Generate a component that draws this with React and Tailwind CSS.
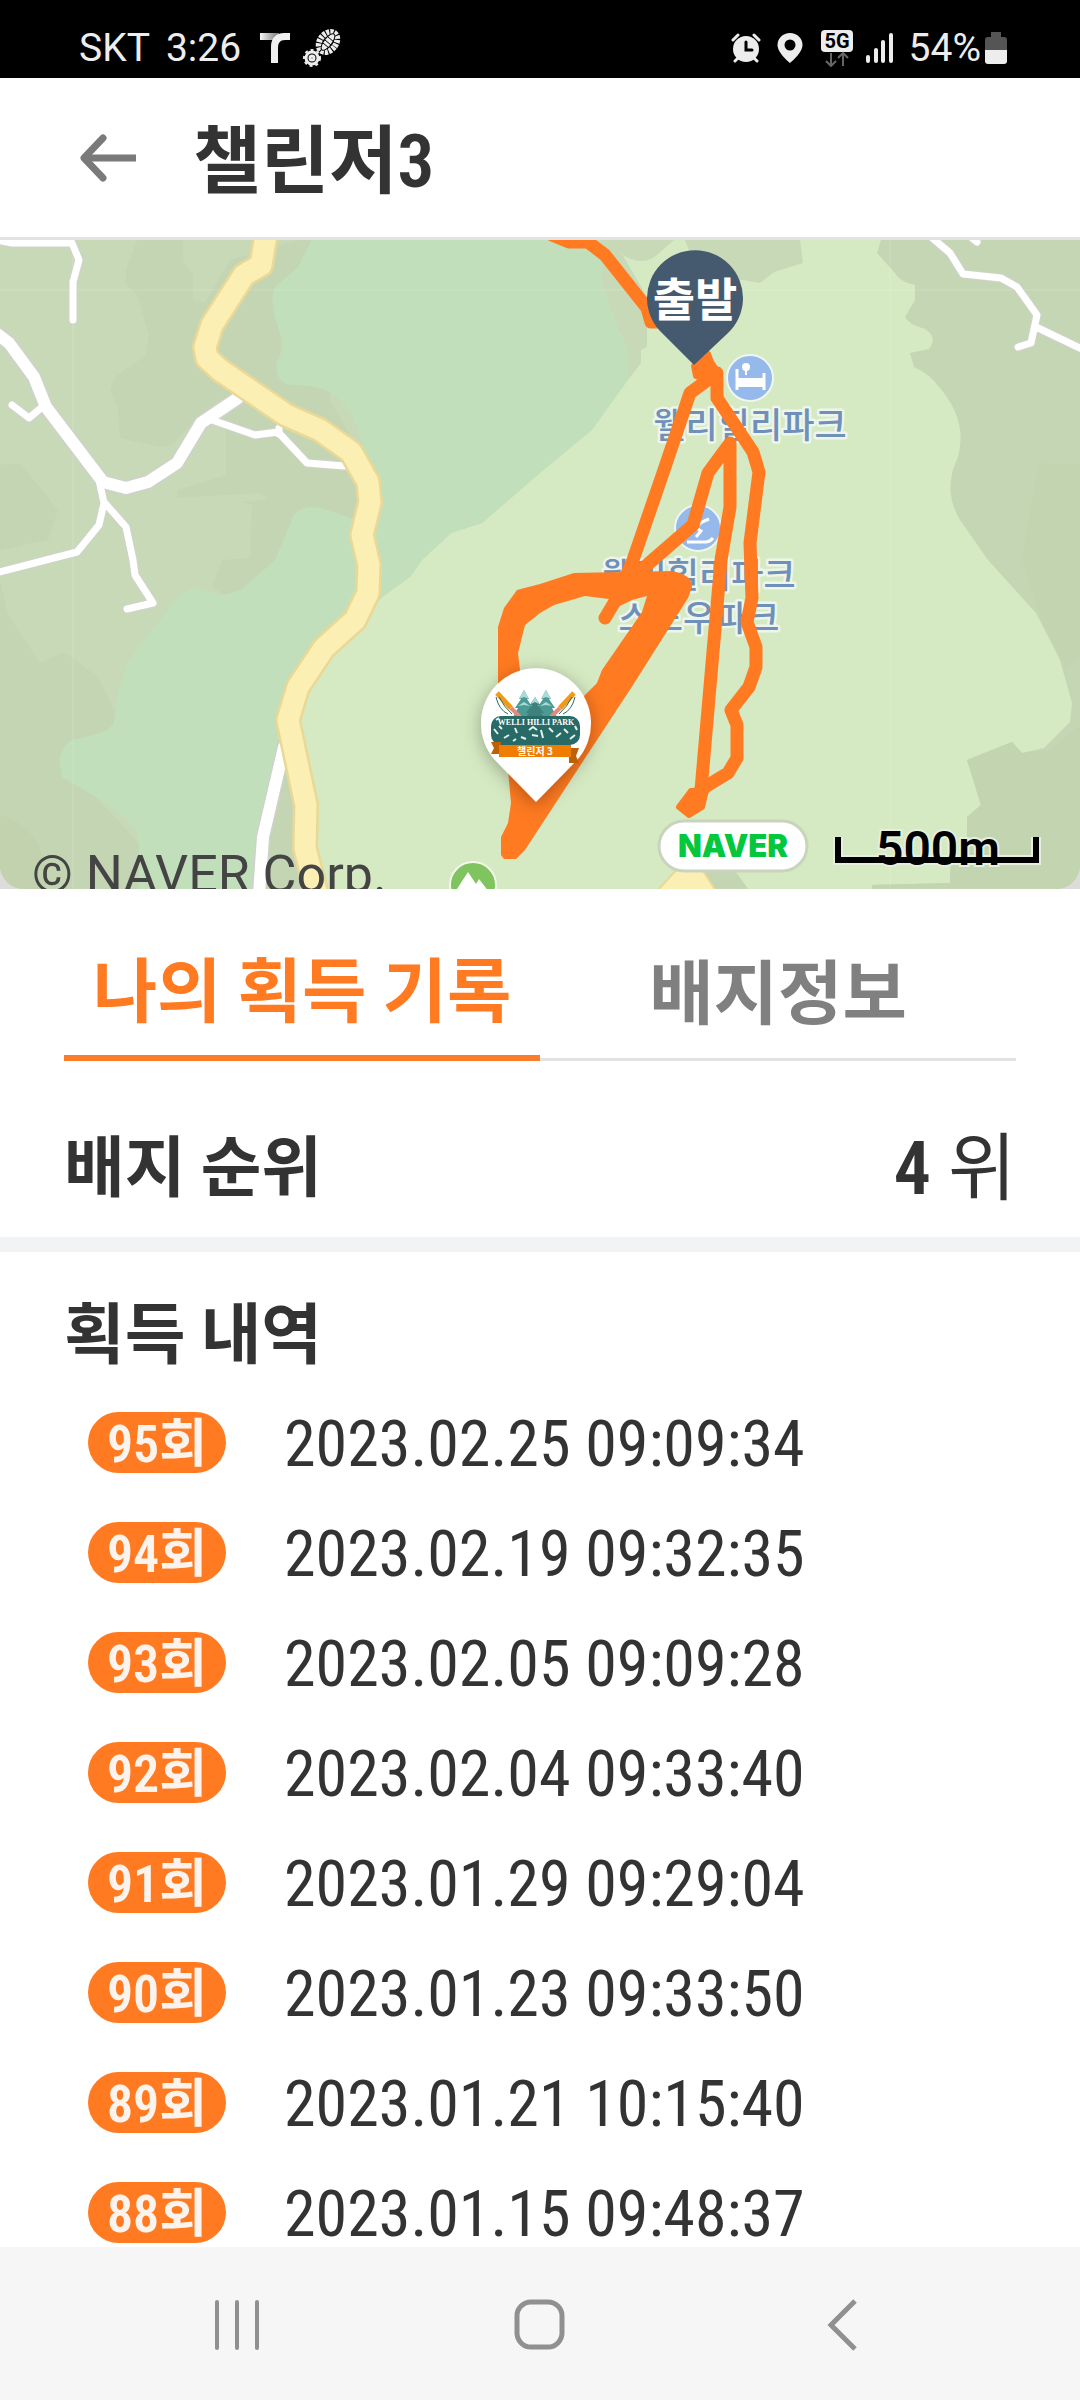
import React, { useState } from 'react';

const records = [
  { count: 95, date: '2023.02.25 09:09:34' },
  { count: 94, date: '2023.02.19 09:32:35' },
  { count: 93, date: '2023.02.05 09:09:28' },
  { count: 92, date: '2023.02.04 09:33:40' },
  { count: 91, date: '2023.01.29 09:29:04' },
  { count: 90, date: '2023.01.23 09:33:50' },
  { count: 89, date: '2023.01.21 10:15:40' },
  { count: 88, date: '2023.01.15 09:48:37' }
];

const tabs = [
  { id: 'records', label: '나의 획득 기록' },
  { id: 'info', label: '배지정보' }
];

const StatusBar = () => (
  <div className="flex h-[78px] items-center justify-between bg-black pl-[79px] pr-[73px] pt-[18px] font-['Roboto',sans-serif] text-[39px] leading-none text-[#ededed]">
    <div className="flex items-center">
      <span>SKT</span>
      <span className="ml-4">3:26</span>
      <svg className="ml-[18px] h-8 w-8" viewBox="0 0 32 32">
        <defs>
          <linearGradient id="tlogo">
            <stop offset="0" stopColor="#f5f5f5" />
            <stop offset="1" stopColor="#777" />
          </linearGradient>
        </defs>
        <path d="M1 1h19v7H1z" fill="url(#tlogo)" />
        <path d="M31 1v7h-5c-5 0-7 3-7 8v15h-7V15C12 6 17 1 25 1z" fill="#f0f0f0" />
      </svg>
      <svg className="ml-3 h-[38px] w-[38px]" viewBox="0 0 38 38" fill="none" stroke="#ededed">
        <ellipse cx="25" cy="13" rx="8" ry="11" transform="rotate(38 25 13)" strokeWidth="6" strokeDasharray="3 1" />
        <ellipse cx="25" cy="13" rx="4" ry="10" transform="rotate(38 25 13)" fill="#ededed" stroke="#000" strokeWidth="1" />
        <path d="M20 14l6 5M22 11l6 5M25 8l6 5" stroke="#000" strokeWidth="1" />
        <circle cx="9" cy="29" r="6" strokeWidth="3" />
        <circle cx="9" cy="29" r="8" strokeWidth="2" strokeDasharray="3 3" />
        <circle cx="9" cy="29" r="2" strokeWidth="3" />
      </svg>
    </div>
    <div className="flex items-center">
      <svg className="h-[30px] w-[30px]" viewBox="0 0 30 30">
        <path d="M2 7l5-5M28 7l-5-5M4 28l4-4M26 28l-4-4" stroke="#ededed" strokeWidth="3" strokeLinecap="round" />
        <circle cx="15" cy="16" r="13" fill="#ededed" />
        <path d="M15 9v8h6" fill="none" stroke="#000" strokeWidth="3" strokeLinecap="round" />
      </svg>
      <svg className="ml-4 h-[30px] w-[26px]" viewBox="0 0 26 30">
        <path fillRule="evenodd" fill="#ededed" d="M13 0C6 0 .5 5 .5 12 .5 20 13 30 13 30s12.500-10 12.500-18C25.500 5 20 0 13 0zm0 6.500a5.500 5.500 0 1 1 0 11 5.500 5.500 0 0 1 0-11z" />
      </svg>
      <svg className="ml-[18px] h-[37px] w-8" viewBox="0 0 32 37">
        <rect width="32" height="22" rx="4" fill="#ededed" />
        <text x="16" y="18" textAnchor="middle" fontFamily="Roboto" fontWeight="700" fontSize="20" fill="#000">5G</text>
        <path d="M10 23v13M5 31l5 5 5-5M22 36V23M17 28l5-5 5 5" fill="none" stroke="#666" strokeWidth="2" />
      </svg>
      <svg className="ml-3 h-[30px] w-7" viewBox="0 0 28 30" stroke="#ededed" strokeWidth="4" strokeLinecap="round">
        <path d="M3 24v4M11 17v11M18 9v19M26 2v26" />
      </svg>
      <span className="ml-4">54%</span>
      <svg className="ml-1 h-8 w-[22px]" viewBox="0 0 22 32">
        <path d="M6 0h10v5h3a3 3 0 0 1 3 3v10H0V8a3 3 0 0 1 3-3h3z" fill="#555" />
        <path d="M0 18h22v11a3 3 0 0 1-3 3H3a3 3 0 0 1-3-3z" fill="#ededed" />
      </svg>
    </div>
  </div>
);

const BadgePin = () => (
  <g>
    <path d="M536 562L495 520A55 55 0 1 1 577 520Z" fill="#fff" filter="url(#pinShadow)" />
    {/* trees */}
    <g fill="#4c9a94">
      <path d="M524 450l-5 9h2l-6 9h3l-6 11h24l-6-11h3l-6-9h2z" />
      <path d="M546 450l-5 9h2l-6 9h3l-6 11h24l-6-11h3l-6-9h2z" />
      <path d="M535 457l-5 8h2l-6 8h3l-4 6h20l-4-6h3l-6-8h2z" fill="#3f827d" />
    </g>
    <g fill="#a9dcd6">
      <path d="M524 450l-5 9 5-2 5 2zM546 450l-5 9 5-2 5 2zM535 457l-4 7 4-2 4 2z" />
      <path d="M518 466l6-4 6 4-6-1zM540 466l6-4 6 4-6-1z" />
    </g>
    {/* crossed skis */}
    <path d="M497 453l14 15" stroke="#f39a14" strokeWidth="5" />
    <path d="M511 468l9 9" stroke="#ea867a" strokeWidth="4" />
    <path d="M574 453l-14 15" stroke="#f39a14" strokeWidth="5" />
    <path d="M560 468l-9 9" stroke="#ea867a" strokeWidth="4" />
    <path d="M496 457q3 13 12 17M499 457q5 10 13 17M575 457q-3 13-12 17M572 457q-5 10-13 17" fill="none" stroke="#276a66" strokeWidth="1" />
    <rect x="491" y="476" width="89" height="29" rx="10" fill="#276a66" />
    <path
      d="M494 489l4 5M499 486l3 3M504 498l5-3M515 488l2 5M521 497l5 2M529 490l4-3 4 3M532 495l6 1M541 490l2 8M549 488l4 4M556 497l5-4M564 489l4 4M570 499l5-4M575 486l2 4M496 480l3-2M513 501l3-2"
      stroke="#e4f2ef"
      strokeWidth="2"
      fill="none"
    />
    <text x="536" y="485" textAnchor="middle" fontFamily="Liberation Serif" fontWeight="700" fontSize="8" fill="#fff">WELLI HILLI PARK</text>
    <path d="M491 502h10v12h-10l3-6zM579 508h-10v15h10l-3-7z" fill="#bd6104" />
    <rect x="499" y="505" width="72" height="12" fill="#f07d00" />
    <text x="535" y="515" textAnchor="middle" fontFamily="Noto Sans CJK KR" fontWeight="700" fontSize="10" fill="#fff">챌린저 3</text>
  </g>
);

const TrackMap = () => (
  <div className="relative overflow-hidden rounded-b-3xl">
    <svg className="block h-auto w-full" viewBox="0 0 1080 649" role="img" aria-label="코스 지도">
      <defs>
        <filter id="pinShadow" x="-40%" y="-40%" width="180%" height="180%">
          <feDropShadow dx="0" dy="4" stdDeviation="9" floodOpacity="0.3" />
        </filter>
      </defs>
      <rect width="1080" height="649" fill="#d5e9c2" />

      {/* terrain, west */}
      <path d="M0 0H620V140L540 233 482 283 451 293 422 320 410 337 382 357 355 390 298 447 290 485 310 580 310 649H0Z" fill="#c8d9b8" />
      <path d="M137 0H183V20L193 35V60L205 62 230 20 300 0H345L330 160 370 230 355 285 275 322 241 350 224 355 212 347 222 320 250 318 252 265 240 262 268 259 260 253 176 258 178 250 226 235V185L200 175 172 205 160 207 120 198 118 170 110 150 115 137 146 115 149 95 137 55 126 45V30Z" fill="#c4d5b4" />
      <path d="M0 225L20 223 58 270 48 300 0 310ZM0 340L8 375 40 423 64 412 98 437 119 480 103 493 72 500 59 520 62 537 96 557 139 603V649H0Z" fill="#c4d5b4" />
      <path d="M0 575Q50 590 45 649H0Z" fill="#c2d2ae" />
      <path d="M312 0L305 13 298 27 275 47Q268 60 281 97 284 112 276 123 276 145 293 145 320 144 337 157 354 172 360 197L375 240 366 290 351 278 327 270Q305 262 294 275L275 320 241 350 224 355 191 347 176 360 152 390 127 423Q117 450 114 483 110 493 72 500 55 510 62 537L96 557Q142 585 139 605V649H260L285 520 290 480 300 445 355 385 382 357 410 337 422 320 451 293 482 283 540 233 592 190 628 140V113L609 63 602 40V0Z" fill="#c1dfba" />
      <path d="M284 525L262 600V649H310L306 565Z" fill="#c4d5b4" />

      {/* terrain, north and east */}
      <path d="M602 0V40L609 63 628 113V140L641 123V110L647 107V57L614 0Z" fill="#c8d9b8" />
      <path d="M614 3L623 15Q642 27 657 15L674 0H614ZM685 0L700 40H743L760 43 774 32 803 23 800 0Z" fill="#c8d9b8" />
      <path d="M881 0L877 13 895 33Q900 42 915 45V60L905 77Q908 84 925 89 938 97 929 109L910 113 914 127Q930 134 939 147 968 180 958 217 942 250 960 280L988 320 1036 373 1060 420 1072 463 1070 482 1044 508 1022 513 1012 502 967 520 981 565 967 577V620H951L950 643 872 645V649H1080V0Z" fill="#c5d6b5" />
      <path d="M1080 225L1039 223 1030 270 1022 320 1040 376 1065 428 1080 420ZM1012 502L967 520 981 565 967 577V620H951L950 643 872 645V649H1080V485L1050 510 1022 513Z" fill="#c3d4b0" />
      <path d="M0 50H1080M73 0V649M890 0V649" stroke="#fff" strokeOpacity="0.18" strokeWidth="1" />

      {/* roads */}
      <g fill="none" strokeLinejoin="round" strokeLinecap="round">
        <g stroke="#d0d2cc" strokeWidth="9">
          <path d="M-4 0L12 3H72L79 20 73 42V80M12 165L29 178 41 168M212 180L255 195 278 192 307 223 344 226M99 240L104 263 99 285 77 312-4 333M104 262L126 287 133 320 135 335 153 363 127 369" />
          <path d="M930-4L950 13 963 34 1001 38 1017 47 1037 75 1031 103 1018 107M1036 87L1084 110M972-2L977 2" />
        </g>
        <path d="M-4 93L9 103 34 137 46 167 103 242 126 248 148 242 177 223 201 183 238 158M284 507L263 597 259 654" stroke="#cfd1cb" strokeWidth="15" />
        <path d="M-4 93L9 103 34 137 46 167 103 242 126 248 148 242 177 223 201 183 238 158M284 507L263 597 259 654" stroke="#fff" strokeWidth="12" />
        <g stroke="#fff" strokeWidth="7">
          <path d="M-4 0L12 3H72L79 20 73 42V80M12 165L29 178 41 168M212 180L255 195 278 192 307 223 344 226M279 188V194M99 240L104 263 99 285 77 312-4 333M104 262L126 287 133 320 135 335 153 363 127 369" />
          <path d="M930-4L950 13 963 34 1001 38 1017 47 1037 75 1031 103 1018 107M1036 87L1084 110M972-2L977 2" />
        </g>
        <path d="M266-5L261 25 244 35 212 85 205 107 207 118 220 130 286 175 320 190 351 212 368 242 370 262 362 295 369 325 368 353 355 380 324 408 298 447 288 480 306 565 305 608 317 655" stroke="#ead896" strokeWidth="26" />
        <path d="M266-5L261 25 244 35 212 85 205 107 207 118 220 130 286 175 320 190 351 212 368 242 370 262 362 295 369 325 368 353 355 380 324 408 298 447 288 480 306 565 305 608 317 655" stroke="#fcefb4" strokeWidth="21" />
      </g>
      <path d="M700 626L736 632 748 649H710Z" fill="#c4d5b4" />
      <path d="M657 651L680 626H700L716 651Z" fill="#fcefb4" stroke="#ead896" strokeWidth="2" />

      {/* places */}
      <circle cx="750" cy="138" r="23" fill="#95b9ea" stroke="#eef6f0" strokeWidth="2" />
      <path d="M737 129v21M764 133v17" stroke="#fff" strokeWidth="3" />
      <path d="M737 138h27v9h-27z" fill="#fff" />
      <circle cx="746" cy="127" r="4" fill="#fff" />
      <path d="M746 127v8" stroke="#fff" strokeWidth="2" />
      <circle cx="698" cy="288" r="23" fill="#95b9ea" stroke="#eef6f0" strokeWidth="2" />
      <path d="M709 279l-7 3-7 5 6 4-5 6M687 302h18q5 0 8-4" stroke="#fff" strokeWidth="3" fill="none" />
      <circle cx="473" cy="645" r="23" fill="#80c45f" stroke="#f2f8ec" strokeWidth="2" />
      <path d="M455 652l13-20 8 12 3-5 10 13z" fill="#fff" />
      <g
        fontFamily="Noto Sans CJK KR"
        fontWeight="500"
        fontSize="35"
        fill="#6f90b8"
        stroke="#eef5ec"
        strokeWidth="5"
        paintOrder="stroke"
        strokeLinejoin="round"
        textAnchor="middle"
      >
        <text x="750" y="198">웰리힐리파크</text>
        <text x="699" y="348">웰리힐리파크</text>
        <text x="699" y="391">스노우파크</text>
      </g>

      {/* recorded track */}
      <g fill="none" stroke="#ff7a20" strokeWidth="13" strokeLinejoin="round" strokeLinecap="round">
        <path d="M552-5L569 2H588L605 15 647 68 651 82H660" />
        <path d="M717 133L690 153 664 230 633 320 620 350" />
        <path d="M700 122L717 137V158L753 212 759 232 750 303 752 358 747 382 756 407V427L749 447 731 470 737 485V518L728 533 705 547 692 562" />
        <path d="M701 550L721 320 730 267V203L708 233 693 285 655 318 626 343 605 378" />
      </g>
      <g fill="#ff7a20" stroke="#ff7a20" strokeWidth="6" strokeLinejoin="round">
        <path d="M694 126L708 114 711 122 719 134 712 142 696 136Z" />
        <path d="M679 567L691 551 706 550 702 567 689 575Z" />
      </g>
      <path
        fillRule="evenodd"
        fill="#ff7a20"
        d="M498 387L504 368 517 350 540 344 574 333 671 331Q692 334 692 347L688 358 633 445 540 587 525 610 516 619H504L501 615V597L508 583 511 563 508 530 498 450ZM520 430L518 413 525 385 540 373 554 365 585 356 609 359 612 362 605 372 622 365 632 360 647 356 642 372 602 430 597 443 583 457 560 500H520Z"
      />

      {/* start pin */}
      <path d="M694 125L662 93A48 48 0 1 1 728 93Z" fill="#455a6e" />
      <text x="695" y="76" textAnchor="middle" fontFamily="Noto Sans CJK KR" fontWeight="700" fontSize="46" fill="#fff">출발</text>
      <BadgePin />

      {/* map logo and scale */}
      <rect x="659" y="581" width="148" height="50" rx="25" fill="#fff" stroke="#c9d4bd" strokeWidth="3" />
      <text x="733" y="617" textAnchor="middle" fontFamily="Inter" fontWeight="900" fontSize="31" fill="#03c73c">NAVER</text>
      <path d="M838 597V620H1036V597" fill="none" stroke="#e6efdd" strokeWidth="10" />
      <text x="938" y="625" textAnchor="middle" fontFamily="Roboto" fontWeight="600" fontSize="48" stroke="#e6efdd" strokeWidth="4" paintOrder="stroke">500m</text>
      <path d="M838 597V620H1036V597" fill="none" stroke="#000" strokeWidth="6" />
    </svg>
    <p className="absolute -bottom-4 left-8 font-['Roboto',sans-serif] text-[52px] leading-[60px] text-[#444]">© NAVER Corp.</p>
  </div>
);

const App = () => {
  const [activeTab, setActiveTab] = useState('records');

  return (
    <div className="flex min-h-screen flex-col bg-white font-['Roboto_Condensed','Noto_Sans_CJK_KR',sans-serif] text-[#333]">
      <StatusBar />

      {/* Header */}
      <header className="flex h-[162px] items-center gap-[57px] border-b-[3px] border-[#e2e2e2] pl-20">
        <button type="button" aria-label="뒤로">
          <svg className="block h-12 w-14" viewBox="0 0 56 48" fill="none" stroke="#7a7a7a" strokeWidth="7">
            <path d="M56 24H6" />
            <path d="M23 4L4 24l19 20" strokeLinecap="round" strokeLinejoin="round" />
          </svg>
        </button>
        <h1 className="pt-2 text-[74px] font-semibold leading-none">챌린저3</h1>
      </header>

      <div className="bg-[#dcdcdc]">
        <TrackMap />
      </div>

      <main className="flex-1">
        {/* Tabs */}
        <div role="tablist" className="mx-16 flex h-[172px]">
          {tabs.map((tab) => (
            <button
              key={tab.id}
              type="button"
              role="tab"
              aria-selected={activeTab === tab.id}
              onClick={() => setActiveTab(tab.id)}
              className={`flex-1 pt-[42px] text-[70px] font-semibold leading-none ${
                activeTab === tab.id
                  ? 'border-b-[6px] border-[#f97d2b] text-[#ff7a20]'
                  : 'border-b-[3px] border-[#e2e2e2] text-[#808080]'
              }`}
            >
              {tab.label}
            </button>
          ))}
        </div>

        {/* Rank */}
        <section className="flex h-[191px] items-center justify-between border-b-[15px] border-[#f2f3f5] px-16 pt-10">
          <h2 className="text-[66px] font-semibold leading-none">배지 순위</h2>
          <p className="text-[74px] leading-none">
            <strong className="font-semibold">4</strong> 위
          </p>
        </section>

        {/* History */}
        <section className="px-16 pt-[52px]">
          <h2 className="text-[66px] font-semibold leading-[64px]">획득 내역</h2>
          <ul className="mt-11 flex flex-col gap-[49px] pl-6">
            {records.map((record) => (
              <li key={record.count} className="flex h-[61px] items-center gap-[58px]">
                <span className="flex h-[61px] w-[138px] items-center justify-center rounded-full bg-[#ff7a20] pt-1 text-[52px] font-semibold leading-none text-[#fbf4ee]">
                  {record.count}회
                </span>
                <time className="pt-1 text-[64px] leading-none">{record.date}</time>
              </li>
            ))}
          </ul>
        </section>
      </main>

      {/* System navigation */}
      <nav className="flex h-[153px] items-center justify-between bg-[#f6f6f6] px-[205px]">
        <button type="button" aria-label="최근 앱">
          <svg className="h-16 w-16" viewBox="0 0 64 64" stroke="#909090" strokeWidth="4" strokeLinecap="round">
            <path d="M12 10v46M32 10v46M52 10v46" />
          </svg>
        </button>
        <button type="button" aria-label="홈">
          <svg className="h-16 w-16" viewBox="0 0 64 64" fill="none" stroke="#909090" strokeWidth="5">
            <rect x="9" y="10" width="45" height="45" rx="14" />
          </svg>
        </button>
        <button type="button" aria-label="뒤로 가기">
          <svg className="h-16 w-16" viewBox="0 0 64 64" fill="none" stroke="#909090" strokeWidth="5">
            <path d="M44 9L20 33l24 24" />
          </svg>
        </button>
      </nav>
    </div>
  );
};

export default App;
